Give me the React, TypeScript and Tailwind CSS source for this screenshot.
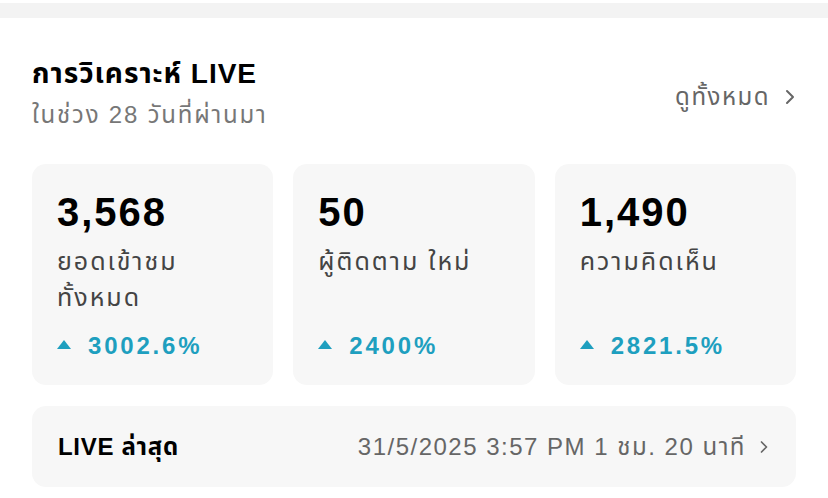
import { ChevronRight } from "lucide-react";

type Stat = {
  value: string;
  label: string[];
  change: string;
};

const stats: Stat[] = [
  { value: "3,568", label: ["ยอดเข้าชม", "ทั้งหมด"], change: "3002.6%" },
  { value: "50", label: ["ผู้ติดตาม ใหม่"], change: "2400%" },
  { value: "1,490", label: ["ความคิดเห็น"], change: "2821.5%" },
];

const font = { fontFamily: '"Liberation Sans", "Noto Sans", "Noto Sans Thai", sans-serif' };

const StatCard = ({ stat }: { stat: Stat }) => (
  <div className="flex h-[221px] flex-col rounded-[14px] bg-[#f7f7f7] px-[25px] pt-[25px]">
    <div className="text-[40px] font-bold leading-[46px] tracking-[2px] text-black">{stat.value}</div>
    <div className="mt-[8px] h-[80px] text-[25px] leading-[36px] tracking-[2px] text-[#444]">
      {stat.label.map((l) => (
        <div key={l}>{l}</div>
      ))}
    </div>
    <div className="mt-[5px] flex items-center text-[24px] font-bold text-[#1e9fbf]">
      <svg width="14" height="9" viewBox="0 0 14 9" className="mr-[17px] mb-[4px]">
        <polygon points="7,0 14,9 0,9" fill="#1e9fbf" />
      </svg>
      <span className="tracking-[2.8px]">{stat.change}</span>
    </div>
  </div>
);

export default function App() {
  return (
    <div className="h-[498px] w-[828px] overflow-hidden bg-white" style={font}>
      <div className="mt-[3px] h-[15px] bg-[#f3f3f3]" />
      <div className="px-[32px]">
        <div className="mt-[37px] flex items-start justify-between">
          <div>
            <div className="text-[28px] font-bold leading-[38px] tracking-[1px] text-black">การวิเคราะห์ LIVE</div>
            <div className="mt-[7px] text-[24px] leading-[30px] tracking-[1.8px] text-[#777]">ในช่วง 28 วันที่ผ่านมา</div>
          </div>
          <div className="mt-[24px] -mr-[6px] flex items-center text-[24px] tracking-[1.5px] text-[#666]">
            <span>ดูทั้งหมด</span>
            <ChevronRight className="ml-[8px] h-[24px] w-[24px]" strokeWidth={2} />
          </div>
        </div>
        <div className="mt-[34px] grid grid-cols-3 gap-[20px]">
          {stats.map((s) => (
            <StatCard key={s.value} stat={s} />
          ))}
        </div>
        <div className="mt-[21px] flex h-[81px] items-center justify-between rounded-[14px] bg-[#f7f7f7] pl-[26px] pr-[22px]">
          <div className="text-[24px] font-bold tracking-[0.7px] text-black">LIVE ล่าสุด</div>
          <div className="flex items-center text-[24px] text-[#666]">
            <span className="tracking-[1.5px]">31/5/2025 3:57 PM 1 ชม. 20 นาที</span>
            <ChevronRight className="ml-[8px] h-[20px] w-[20px]" strokeWidth={2} />
          </div>
        </div>
      </div>
    </div>
  );
}
